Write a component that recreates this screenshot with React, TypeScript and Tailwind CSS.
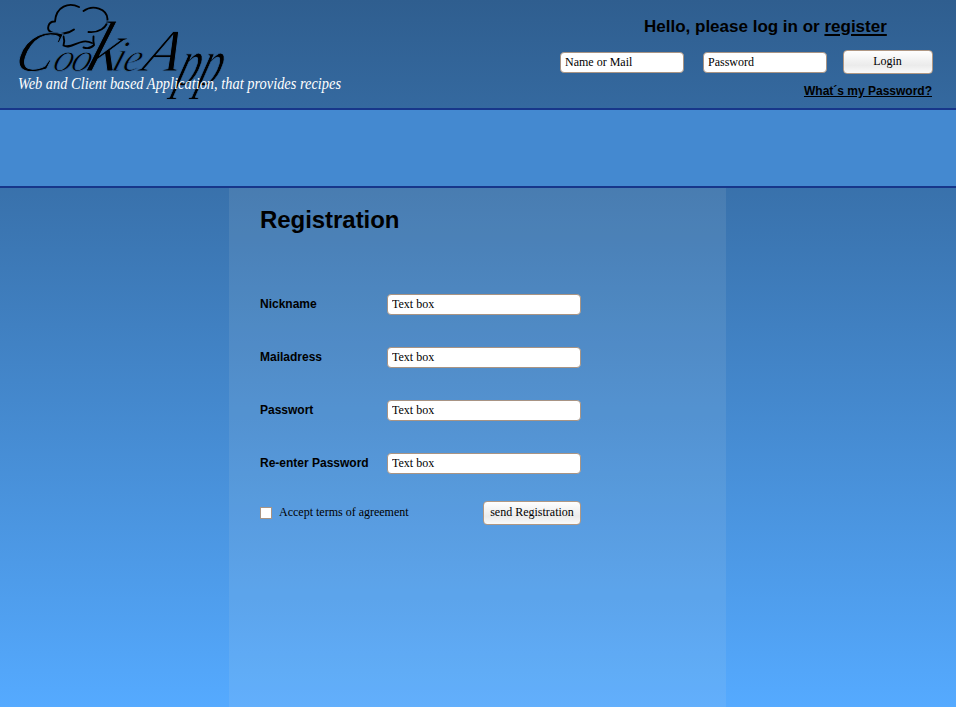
const serif = "font-['Liberation_Serif',serif] text-[12px] leading-[14px] text-black";
const field = `${serif} h-[21px] rounded-[4px] border border-[#a89484] bg-white px-1 pb-px outline-none`;
const button = `${serif} rounded-[4px] border border-[#b09884] bg-linear-to-b from-white via-[#ebebeb] via-65% to-[#fafafa] text-center`;

function Logo() {
  return (
    <svg width="360" height="108" viewBox="0 0 360 108" className="block shrink-0 overflow-visible">
      <g fill="none" stroke="#000" strokeLinecap="round" strokeLinejoin="round">
        <path strokeWidth="1.9" d="M79 7C69 2 56 6 55 21.500C48 21 46 30 51 32C57 35.500 68 34 74 29.500" />
        <path strokeWidth="1.9" d="M83.500 11C93 4 107 9 107.500 19C108 28 98 33 88.500 32" />
        <path strokeWidth="1.9" d="M63.500 36.500Q65 41 63.500 45.500C72 50 80 37 92 43" />
        <path strokeWidth="1.9" d="M93.500 36.500Q93 41 94 45Q90 49.500 83.500 47.500" />
      </g>
      <text
        y="0"
        transform="translate(0 71) skewX(-18)"
        fontFamily="'Liberation Serif', serif"
        fontStyle="italic"
        fill="#000"
        stroke="#326498"
        strokeWidth="0.9"
      >
        <tspan x="12" fontSize="58">C</tspan>
        <tspan x="51" fontSize="40">o</tspan>
        <tspan x="69" fontSize="40">o</tspan>
        <tspan x="84" fontSize="72">k</tspan>
        <tspan x="110" fontSize="44">i</tspan>
        <tspan x="121" fontSize="40">e</tspan>
        <tspan x="140" fontSize="60">A</tspan>
        <tspan x="178" y="14" fontSize="68" textLength="22" lengthAdjust="spacingAndGlyphs">p</tspan>
        <tspan x="200" y="14" fontSize="68" textLength="22" lengthAdjust="spacingAndGlyphs">p</tspan>
      </text>
      <text x="18" y="89" textLength="323" lengthAdjust="spacingAndGlyphs" fontFamily="'Liberation Serif', serif" fontStyle="italic" fontSize="16" fill="#fff">
        Web and Client based Application, that provides recipes
      </text>
    </svg>
  );
}

function Row({ label }: { label: string }) {
  return (
    <div className="flex h-[53px] items-start">
      <label className="w-[127px] pt-[3px] text-[12px] leading-[14px] font-bold whitespace-nowrap">{label}</label>
      <input className={`${field} w-[194px]`} defaultValue="Text box" />
    </div>
  );
}

export default function App() {
  return (
    <div className="flex h-[707px] w-[956px] flex-col overflow-hidden bg-linear-to-b from-[#2f5e8f] to-[#55aaff] font-['Liberation_Sans',Arial,sans-serif] text-black">
      <header className="flex h-[108px] justify-between">
        <Logo />
        <div className="flex w-[396px] flex-col pr-[23px]">
          <p className="mt-4 pl-[84px] text-[17px] leading-[21px] font-bold whitespace-nowrap">
            Hello, please log in or <a className="underline decoration-2 underline-offset-2">register</a>
          </p>
          <div className="mt-[13px] flex items-start">
            <input className={`${field} mt-0.5 w-[124px]`} defaultValue="Name or Mail" />
            <input className={`${field} mt-0.5 ml-[19px] w-[124px]`} defaultValue="Password" />
            <button className={`${button} ml-4 h-6 w-[90px] pr-px pb-0.5`}>Login</button>
          </div>
          <a className="mt-[10px] mr-px self-end text-[12px] leading-[14px] font-bold underline">What´s my Password?</a>
        </div>
      </header>
      <nav className="h-20 shrink-0 border-y-2 border-[#17368a] bg-[#4489d0]" />
      <main className="ml-[229px] w-[497px] flex-1 bg-[#dce4e0]/10 pl-[31px]">
        <h1 className="pt-[18px] text-[24px] leading-[28px] font-bold tracking-[-0.05px]">Registration</h1>
        <form className="mt-[60px] w-[321px]">
          <Row label="Nickname" />
          <Row label="Mailadress" />
          <Row label="Passwort" />
          <Row label="Re-enter Password" />
          <div className="-mt-[5px] flex items-start justify-between">
            <label className={`${serif} flex items-start gap-[7px] pt-1`}>
              <input type="checkbox" className="mt-0.5 size-3 appearance-none border border-[#a89484] bg-white" />
              Accept terms of agreement
            </label>
            <button type="button" className={`${button} h-6 w-[98px] pb-0.5 whitespace-nowrap`}>send Registration</button>
          </div>
        </form>
      </main>
    </div>
  );
}
